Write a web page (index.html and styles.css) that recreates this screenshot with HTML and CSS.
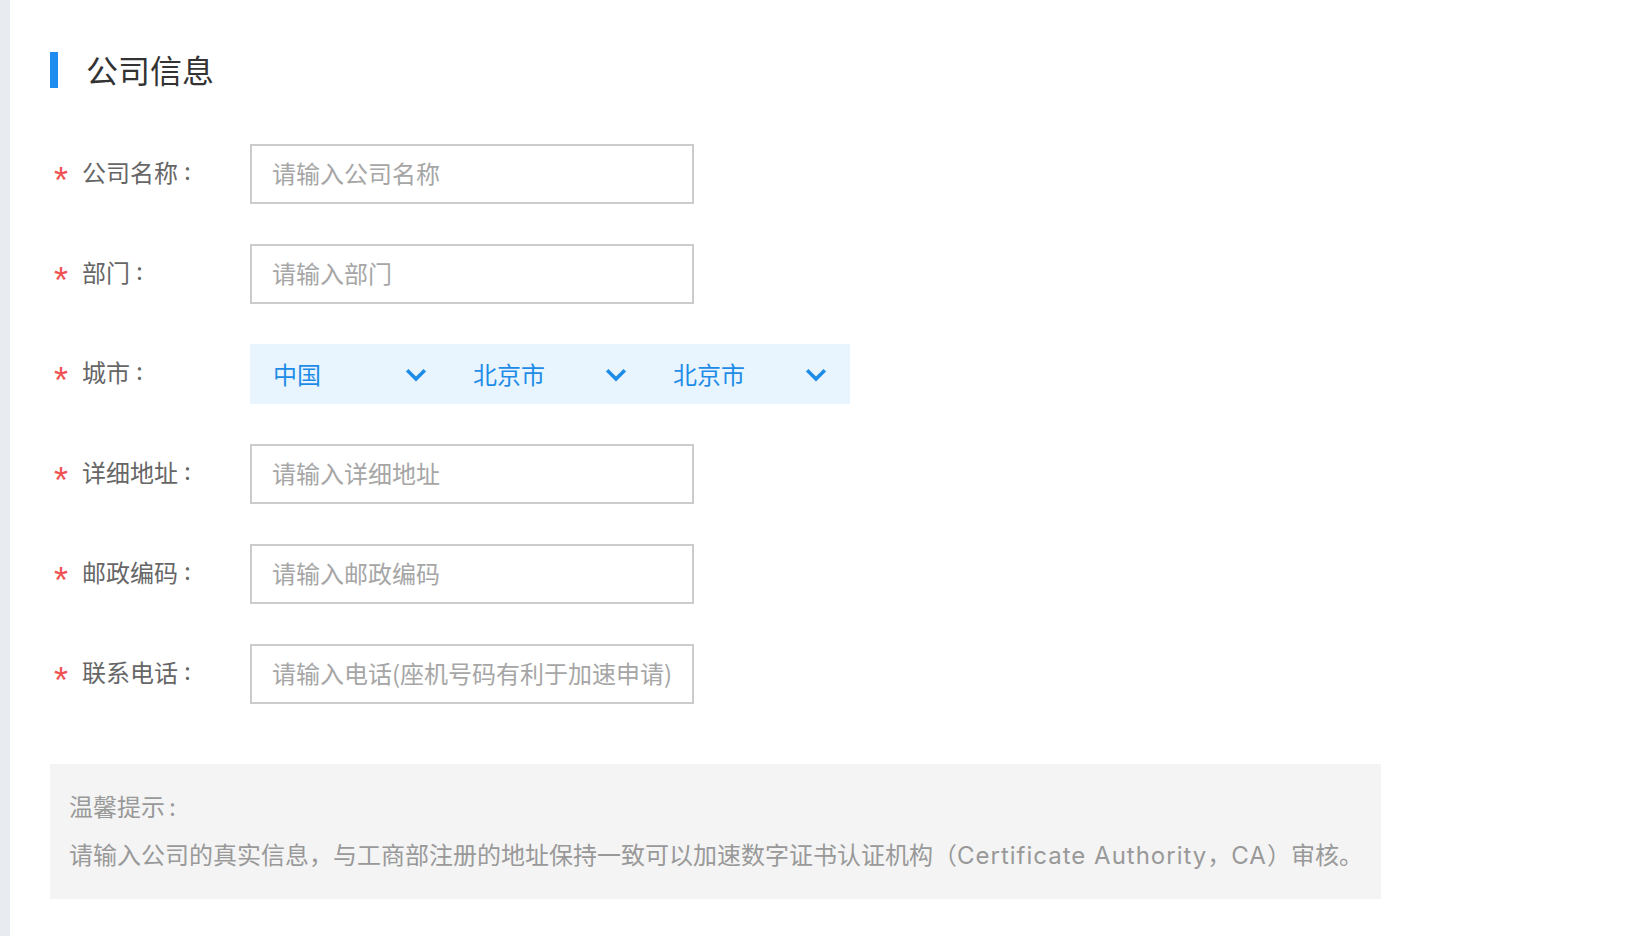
FILE: index.html
```html
<!DOCTYPE html>
<html lang="zh-CN">
<head>
<meta charset="utf-8">
<title>公司信息</title>
<link rel="stylesheet" href="styles.css">
</head>
<body>
<div class="page">
  <div class="side-strip"></div>
  <main class="content">
    <h2 class="section-title"><span class="title-bar"></span><span class="title-text">公司信息</span></h2>

    <form class="form">
      <div class="form-row">
        <label class="form-label"><span class="req">*</span>公司名称<span class="colon">:</span></label>
        <div class="form-control"><input class="text-input" type="text" placeholder="请输入公司名称"></div>
      </div>
      <div class="form-row">
        <label class="form-label"><span class="req">*</span>部门<span class="colon">:</span></label>
        <div class="form-control"><input class="text-input" type="text" placeholder="请输入部门"></div>
      </div>
      <div class="form-row">
        <label class="form-label"><span class="req">*</span>城市<span class="colon">:</span></label>
        <div class="form-control">
          <div class="city-select">
            <div class="select-seg"><span class="seg-text">中国</span>
              <svg class="chev" viewBox="0 0 22 14" width="22" height="14"><path d="M2.2 2.2 L11 11 L19.8 2.2" fill="none" stroke="currentColor" stroke-width="3.6"/></svg>
            </div>
            <div class="select-seg"><span class="seg-text">北京市</span>
              <svg class="chev" viewBox="0 0 22 14" width="22" height="14"><path d="M2.2 2.2 L11 11 L19.8 2.2" fill="none" stroke="currentColor" stroke-width="3.6"/></svg>
            </div>
            <div class="select-seg"><span class="seg-text">北京市</span>
              <svg class="chev" viewBox="0 0 22 14" width="22" height="14"><path d="M2.2 2.2 L11 11 L19.8 2.2" fill="none" stroke="currentColor" stroke-width="3.6"/></svg>
            </div>
          </div>
        </div>
      </div>
      <div class="form-row">
        <label class="form-label"><span class="req">*</span>详细地址<span class="colon">:</span></label>
        <div class="form-control"><input class="text-input" type="text" placeholder="请输入详细地址"></div>
      </div>
      <div class="form-row">
        <label class="form-label"><span class="req">*</span>邮政编码<span class="colon">:</span></label>
        <div class="form-control"><input class="text-input" type="text" placeholder="请输入邮政编码"></div>
      </div>
      <div class="form-row">
        <label class="form-label"><span class="req">*</span>联系电话<span class="colon">:</span></label>
        <div class="form-control"><input class="text-input" type="text" placeholder="请输入电话(座机号码有利于加速申请)"></div>
      </div>
    </form>

    <div class="tip-box">
      <p class="tip-line">温馨提示<span class="tip-colon">:</span></p>
      <p class="tip-line">请输入公司的真实信息，与工商部注册的地址保持一致可以加速数字证书认证机构（<span class="latin">Certificate Authority</span>，<span class="latin">CA</span>）审核。</p>
    </div>
  </main>
</div>
</body>
</html>
```

FILE: styles.css
```css
* { box-sizing: border-box; }

html, body {
  margin: 0;
  padding: 0;
  background: #ffffff;
  font-family: "Inter", "Noto Sans CJK SC", sans-serif;
}

.page {
  display: flex;
  min-height: 936px;
}

.side-strip {
  width: 10px;
  flex: 0 0 10px;
  background: #e8ebf0;
}

.content {
  flex: 1;
  padding: 52px 0 0 40px;
}

.section-title {
  display: flex;
  align-items: center;
  height: 36px;
  margin: 0;
  font-weight: normal;
}

.title-bar {
  width: 8px;
  height: 36px;
  background: #1f8def;
}

.title-text {
  margin-left: 28px;
  padding-bottom: 2px;
  font-family: "Noto Sans CJK SC", sans-serif;
  font-size: 32px;
  color: #333333;
  line-height: 36px;
}

.form {
  display: flex;
  flex-direction: column;
  gap: 40px;
  margin-top: 56px;
}

.form-row {
  display: flex;
  align-items: center;
  height: 60px;
}

.form-label {
  width: 200px;
  flex: 0 0 200px;
  display: flex;
  align-items: center;
  padding-bottom: 4px;
  font-family: "Noto Sans CJK SC", sans-serif;
  font-size: 24px;
  color: #666666;
  line-height: 30px;
}

.colon {
  margin-left: 6px;
  font-family: "Inter", sans-serif;
}

.req {
  width: 32px;
  padding: 18px 0 0 4px;
  color: #f05252;
  font-family: "Liberation Sans", sans-serif;
  font-size: 36px;
  line-height: 36px;
}

.form-control {
  display: flex;
}

.text-input {
  width: 444px;
  height: 60px;
  border: 2px solid #cccccc;
  border-radius: 0;
  padding: 0 20px 4px;
  font-family: "Noto Sans CJK SC", sans-serif;
  font-size: 24px;
  color: #333333;
  outline: none;
  background: #ffffff;
}

.text-input::placeholder {
  color: #a6a6a6;
}

.city-select {
  display: flex;
  width: 600px;
  height: 60px;
  background: #e8f5fe;
}

.select-seg {
  flex: 1;
  display: flex;
  align-items: center;
  justify-content: space-between;
  padding: 0 23px;
  color: #1e8ce6;
}

.seg-text {
  font-family: "Noto Sans CJK SC", sans-serif;
  font-size: 24px;
  line-height: 30px;
}

.chev {
  display: block;
  margin-top: 2px;
}

.tip-box {
  width: 1331px;
  margin-top: 60px;
  padding: 20px 19px 19px;
  background: #f4f4f4;
}

.tip-line {
  margin: 0;
  font-family: "Inter", "Noto Sans CJK SC", sans-serif;
  font-size: 24px;
  line-height: 48px;
  color: #999999;
  white-space: nowrap;
}

.tip-colon {
  margin-left: 4px;
}

.latin {
  letter-spacing: 1px;
}
```
